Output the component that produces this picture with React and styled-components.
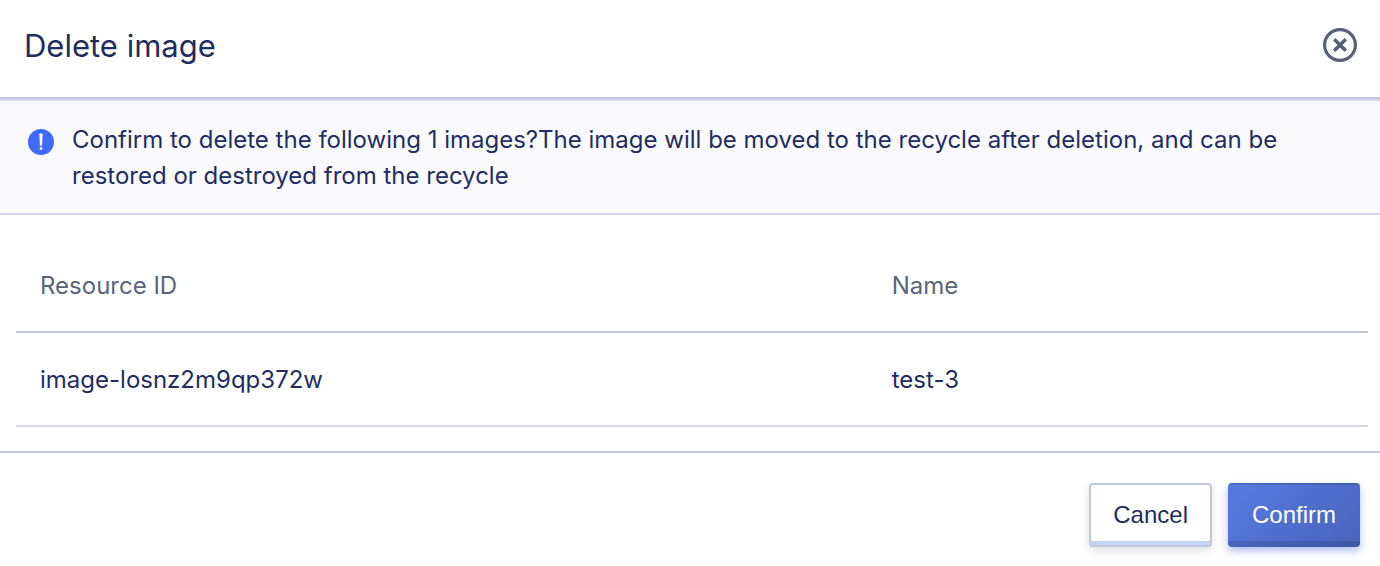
import React from 'react';
import styled, { createGlobalStyle } from 'styled-components';

const Global = createGlobalStyle`
  * { box-sizing: border-box; }
  body {
    margin: 0;
    background: #fff;
    color: #1f2d61;
    font-family: Inter, "Liberation Sans", sans-serif;
    font-size: 24px;
  }
`;

const Dialog = styled.section`
  width: 100%;
  background: #fff;
`;

const Header = styled.header`
  display: flex;
  align-items: center;
  justify-content: space-between;
  padding: 26px 22px 31px 24px;
  border-bottom: 2px solid #c3c8da;
`;

const Title = styled.h1`
  margin: 0;
  font-size: 31px;
  line-height: 40px;
  font-weight: 400;
`;

const CloseButton = styled.button`
  display: flex;
  padding: 0 0 2px;
  border: 0;
  background: none;
  color: #566178;
  cursor: pointer;
`;

const Notice = styled.div`
  display: flex;
  gap: 18px;
  padding: 21px 28px 19px;
  background: #fafafd;
  border-top: 2px solid #d1d6e9;
  border-bottom: 2px solid #d1d6e9;
  svg { flex: none; margin-top: 7px; }
`;

const Message = styled.p`
  margin: 0;
  line-height: 36px;
`;

const Body = styled.div`
  padding: 26px 12px 24px 16px;
`;

const Table = styled.table`
  width: 100%;
  table-layout: fixed;
  border-collapse: separate;
  border-spacing: 0;
  text-align: left;
`;

const HeadCell = styled.th`
  width: ${({ $width }) => $width};
  height: 92px;
  padding: 0 24px 2px;
  color: #5a657a;
  font-weight: 400;
  border-bottom: 2px solid #c3c8da;
`;

const Cell = styled.td`
  height: 94px;
  padding: 0 24px;
  border-bottom: 2px solid #d1d6e9;
`;

const Footer = styled.footer`
  display: flex;
  justify-content: flex-end;
  gap: 16px;
  padding: 30px 20px 19px;
  border-top: 2px solid #c3c8da;
`;

const Button = styled.button`
  height: 64px;
  padding: 0 22px;
  border: 2px solid #c3c8da;
  border-radius: 4px;
  background: #fff;
  box-shadow: inset 0 -4px 0 #c5d3f8, 0 4px 8px rgba(0, 0, 0, 0.12);
  color: #1f2d61;
  font-family: "Liberation Sans", sans-serif;
  font-size: 24px;
  cursor: pointer;
`;

const PrimaryButton = styled(Button)`
  border-color: transparent;
  background:
    linear-gradient(rgba(0, 0, 0, 0.13), rgba(0, 0, 0, 0.13)) top / 100% 2px no-repeat border-box,
    linear-gradient(rgba(0, 0, 0, 0.13), rgba(0, 0, 0, 0.13)) bottom / 100% 6px no-repeat border-box,
    linear-gradient(135deg, #567be0, #4864bd) border-box;
  box-shadow: 0 4px 8px rgba(75, 110, 220, 0.45);
  color: #fff;
`;

export default function App() {
  return (
    <Dialog role="dialog" aria-labelledby="title">
      <Global />
      <Header>
        <Title id="title">Delete image</Title>
        <CloseButton type="button" aria-label="Close">
          <svg width="36" height="36" viewBox="0 0 36 36" fill="none" stroke="currentColor">
            <circle cx="18" cy="18" r="15.4" strokeWidth="3.2" />
            <path d="M12.2 12.2l11.6 11.6M23.8 12.2L12.2 23.8" strokeWidth="3.6" />
          </svg>
        </CloseButton>
      </Header>
      <Notice>
        <svg width="26" height="26" viewBox="0 0 26 26">
          <circle cx="13" cy="13" r="13" fill="#3e6bf8" />
          <path d="M11.4 5.2q0-1 1.6-1t1.6 1l-.5 11.3q-1.1.8-2.2 0z" fill="#fff" />
          <circle cx="13" cy="19.5" r="1.4" fill="#fff" />
        </svg>
        <Message>
          Confirm to delete the following 1 images?The image will be moved to the recycle after deletion, and can be restored or destroyed from the recycle
        </Message>
      </Notice>
      <Body>
        <Table>
          <thead>
            <tr>
              <HeadCell scope="col" $width="63%">Resource ID</HeadCell>
              <HeadCell scope="col">Name</HeadCell>
            </tr>
          </thead>
          <tbody>
            <tr>
              <Cell>image-losnz2m9qp372w</Cell>
              <Cell>test-3</Cell>
            </tr>
          </tbody>
        </Table>
      </Body>
      <Footer>
        <Button type="button">Cancel</Button>
        <PrimaryButton type="button">Confirm</PrimaryButton>
      </Footer>
    </Dialog>
  );
}
